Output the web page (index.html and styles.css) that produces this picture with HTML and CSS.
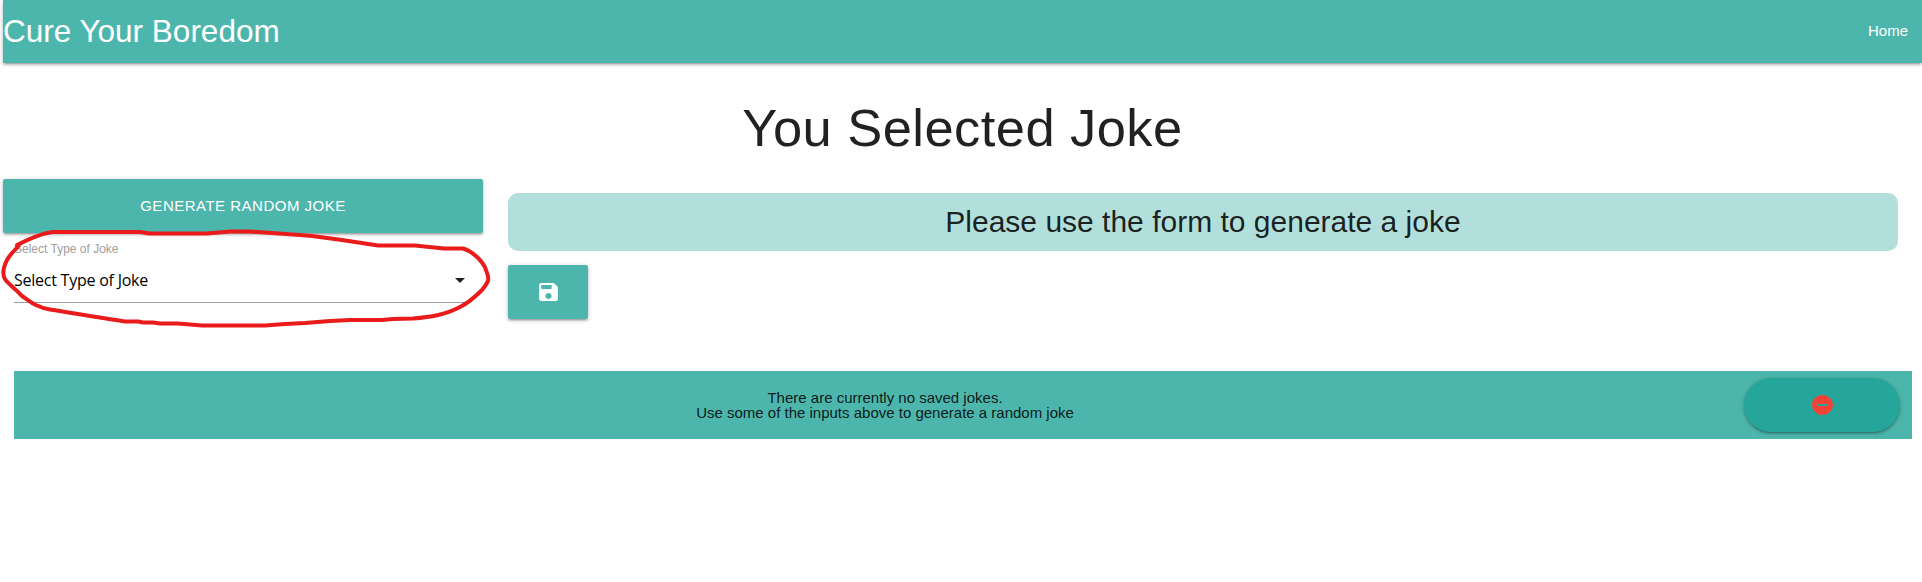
FILE: index.html
```html
<!DOCTYPE html>
<html lang="en">
<head>
<meta charset="utf-8">
<title>Cure Your Boredom</title>
<link rel="stylesheet" href="styles.css">
</head>
<body>
<nav class="navbar">
  <a class="brand">Cure Your Boredom</a>
  <a class="nav-link">Home</a>
</nav>
<h1 class="page-title"><span>You Selected Joke</span></h1>
<main class="row">
  <section class="form-col">
    <button class="btn btn-wide"><span>Generate Random Joke</span></button>
    <div class="select-field">
      <label class="select-label"><span>Select Type of Joke</span></label>
      <div class="select-input">
        <span class="select-value">Select Type of Joke</span>
        <svg class="caret" width="24" height="24" viewBox="0 0 24 24"><path d="M7 10l5 5 5-5z"/></svg>
      </div>
    </div>
    <svg class="scribble" width="500" height="160" viewBox="0 170 500 160">
      <path d="M17 245C27 240 43 233 53 232H140L149 233.500H207L230 231.500H250L300 235L312 236L342 240L378 245.500H415L444 248.500H463C472 251 483 261 486 270C490 280 489 281 482 290C473 299 468 303 460 307C445 315 430 317 413 318.500L393 319L382 320H350L330 321L305 323L285 324L265 325.500H202L178 323.500H160L153 322.500H143L138 321.500H125C100 318 78 314 50 309.500C35 307 30 301 22 296C16 289 8 284 5 279C2 274 4 266 7 260C12 251 17 249 19 245Z"/>
    </svg>
  </section>
  <section class="joke-col">
    <div class="joke-panel"><span>Please use the form to generate a joke</span></div>
    <button class="btn btn-save" aria-label="Save">
      <svg width="25" height="24" viewBox="0 0 24 24" preserveAspectRatio="none"><path d="M17 3H5c-1.110 0-2 .9-2 2v14c0 1.100.89 2 2 2h14c1.100 0 2-.9 2-2V7l-4-4zm-5 16c-1.660 0-3-1.340-3-3s1.340-3 3-3 3 1.340 3 3-1.340 3-3 3zm3-10H5V5h10v4z"/></svg>
    </button>
  </section>
</main>
<footer class="saved">
  <p class="saved-text"><span>There are currently no saved jokes.</span><br><span>Use some of the inputs above to generate a random joke</span></p>
  <button class="btn btn-remove" aria-label="Remove">
    <svg width="25" height="24" viewBox="0 0 24 24" preserveAspectRatio="none"><path d="M12 2C6.480 2 2 6.480 2 12s4.480 10 10 10 10-4.480 10-10S17.520 2 12 2zm5 11H7v-2h10v2z"/></svg>
  </button>
</footer>
</body>
</html>
```
FILE: styles.css
```css
* { box-sizing: border-box; }
body {
  margin: 0;
  padding-left: 3px;
  background: #fff;
  color: rgba(0, 0, 0, 0.87);
  font: 15px/1.5 "Liberation Sans", Arial, sans-serif;
  overflow: hidden;
}
.navbar {
  display: flex;
  justify-content: space-between;
  align-items: center;
  height: 63px;
  padding-right: 14px;
  background: #4db6ac;
  color: #fff;
  box-shadow: 0 2px 2px 0 rgba(0, 0, 0, 0.14), 0 3px 1px -2px rgba(0, 0, 0, 0.12), 0 1px 5px 0 rgba(0, 0, 0, 0.2);
}
.brand { font-size: 31.5px; }
.page-title {
  margin: 36px 0 22px;
  font-size: 52.5px;
  font-weight: 400;
  line-height: 58px;
  letter-spacing: 0.43px;
  text-align: center;
}
.row {
  display: grid;
  grid-template-columns: 480px 1390px;
  column-gap: 25px;
  height: 192px;
}
.form-col { position: relative; }
.btn {
  display: flex;
  align-items: center;
  justify-content: center;
  height: 54px;
  padding: 0;
  border: 0;
  border-radius: 2px;
  background: #4db6ac;
  color: #fff;
  fill: #fff;
  font: 15px "Liberation Sans", Arial, sans-serif;
  letter-spacing: 0.5px;
  text-transform: uppercase;
  box-shadow: 0 2px 2px 0 rgba(0, 0, 0, 0.14), 0 3px 1px -2px rgba(0, 0, 0, 0.12), 0 1px 5px 0 rgba(0, 0, 0, 0.2);
}
.btn-wide { width: 100%; padding-bottom: 2px; }
.select-field { margin: 7px 14px 0 11px; }
.select-label {
  display: block;
  color: #9e9e9e;
  font-size: 12px;
  line-height: 18px;
}
.select-input {
  display: flex;
  align-items: center;
  justify-content: space-between;
  height: 45px;
  border-bottom: 1px solid #9e9e9e;
  color: #000;
}
.select-value {
  font: 16px "Open Sans", "Noto Sans", sans-serif;
  letter-spacing: -0.24px;
}
.caret {
  margin-right: -3px;
  fill: rgba(0, 0, 0, 0.87);
}
.scribble {
  position: absolute;
  left: -3px;
  top: -9px;
  fill: none;
  stroke: #e91b1b;
  stroke-width: 4;
  stroke-linejoin: round;
}
.joke-col { padding-top: 14px; }
.joke-panel {
  height: 58px;
  margin-bottom: 14px;
  border-radius: 10px;
  background: #b2dfdb;
  font-size: 30px;
  line-height: 58px;
  text-align: center;
}
.btn-save { width: 80px; }
.saved {
  display: flex;
  align-items: center;
  height: 68px;
  margin: 0 10px 0 11px;
  background: #4db6ac;
}
.saved-text {
  flex: 1;
  margin: 0;
  padding-left: 12px;
  line-height: 15px;
  text-align: center;
}
.btn-remove {
  width: 156px;
  margin: 0 12px 0 0;
  border-radius: 27px;
  background: #26a69a;
  fill: #f44336;
}
```
